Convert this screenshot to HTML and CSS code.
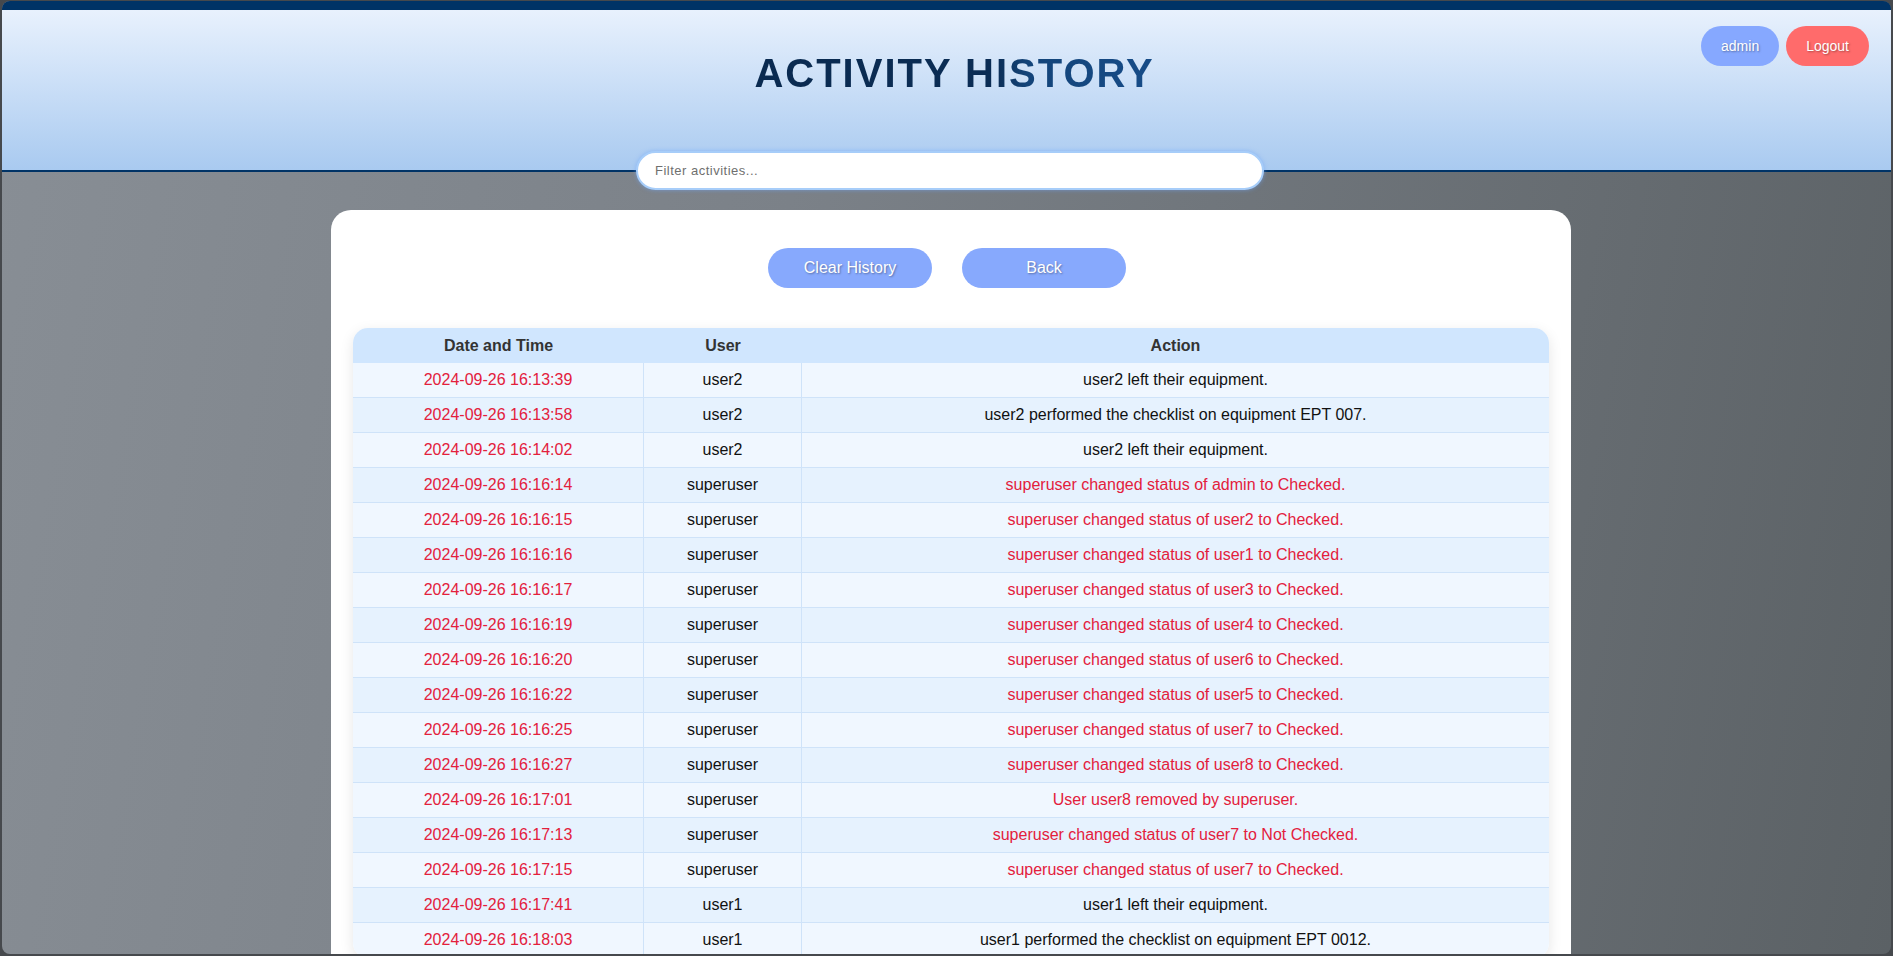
FILE: index.html
```html
<!DOCTYPE html>
<html lang="en">
<head>
<meta charset="utf-8">
<title>Activity History</title>
<link rel="stylesheet" href="styles.css">
</head>
<body>
<div class="window">
  <header class="header">
    <div class="header-spacer"></div>
    <h1 class="title">ACTIVITY HISTORY</h1>
    <div class="user-actions">
      <button class="pill pill-user">admin</button>
      <button class="pill pill-logout">Logout</button>
    </div>
  </header>

  <div class="filter-wrap">
    <input class="filter" type="text" placeholder="Filter activities...">
  </div>

  <main class="main">
    <section class="card">
      <div class="actions">
        <button class="action-btn">Clear History</button>
        <button class="action-btn">Back</button>
      </div>

      <table class="history">
        <colgroup>
          <col class="col-date">
          <col class="col-user">
          <col class="col-action">
        </colgroup>
        <thead>
          <tr><th>Date and Time</th><th>User</th><th>Action</th></tr>
        </thead>
        <tbody>
          <tr><td class="date">2024-09-26 16:13:39</td><td>user2</td><td>user2 left their equipment.</td></tr>
          <tr><td class="date">2024-09-26 16:13:58</td><td>user2</td><td>user2 performed the checklist on equipment EPT 007.</td></tr>
          <tr><td class="date">2024-09-26 16:14:02</td><td>user2</td><td>user2 left their equipment.</td></tr>
          <tr><td class="date">2024-09-26 16:16:14</td><td>superuser</td><td class="alert">superuser changed status of admin to Checked.</td></tr>
          <tr><td class="date">2024-09-26 16:16:15</td><td>superuser</td><td class="alert">superuser changed status of user2 to Checked.</td></tr>
          <tr><td class="date">2024-09-26 16:16:16</td><td>superuser</td><td class="alert">superuser changed status of user1 to Checked.</td></tr>
          <tr><td class="date">2024-09-26 16:16:17</td><td>superuser</td><td class="alert">superuser changed status of user3 to Checked.</td></tr>
          <tr><td class="date">2024-09-26 16:16:19</td><td>superuser</td><td class="alert">superuser changed status of user4 to Checked.</td></tr>
          <tr><td class="date">2024-09-26 16:16:20</td><td>superuser</td><td class="alert">superuser changed status of user6 to Checked.</td></tr>
          <tr><td class="date">2024-09-26 16:16:22</td><td>superuser</td><td class="alert">superuser changed status of user5 to Checked.</td></tr>
          <tr><td class="date">2024-09-26 16:16:25</td><td>superuser</td><td class="alert">superuser changed status of user7 to Checked.</td></tr>
          <tr><td class="date">2024-09-26 16:16:27</td><td>superuser</td><td class="alert">superuser changed status of user8 to Checked.</td></tr>
          <tr><td class="date">2024-09-26 16:17:01</td><td>superuser</td><td class="alert">User user8 removed by superuser.</td></tr>
          <tr><td class="date">2024-09-26 16:17:13</td><td>superuser</td><td class="alert">superuser changed status of user7 to Not Checked.</td></tr>
          <tr><td class="date">2024-09-26 16:17:15</td><td>superuser</td><td class="alert">superuser changed status of user7 to Checked.</td></tr>
          <tr><td class="date">2024-09-26 16:17:41</td><td>user1</td><td>user1 left their equipment.</td></tr>
          <tr><td class="date">2024-09-26 16:18:03</td><td>user1</td><td>user1 performed the checklist on equipment EPT 0012.</td></tr>
        </tbody>
      </table>
    </section>
  </main>
</div>
</body>
</html>
```
FILE: styles.css
```css
* {
  box-sizing: border-box;
}

html,
body {
  margin: 0;
  height: 100%;
  overflow: hidden;
}

body {
  background: #46494d;
  font-family: "Liberation Sans", Arial, sans-serif;
}

.window {
  margin: 1px 2px 2px 2px;
  height: calc(100% - 3px);
  border-radius: 8px;
  overflow: hidden;
  background: linear-gradient(100deg, #888e95 0%, #7b8188 40%, #5b6165 100%);
}

/* Header */
.header {
  height: 171px;
  border-top: 9px solid #003366;
  border-bottom: 2px solid #003366;
  background: linear-gradient(to bottom, #e8f1fd 0%, #a9caf0 100%);
  display: grid;
  grid-template-columns: 1fr auto 1fr;
  padding: 0 22px;
}

.title {
  margin: 40px 0 0 16px;
  font-size: 40px;
  line-height: 46px;
  font-weight: bold;
  letter-spacing: 2px;
  background: linear-gradient(90deg, #0a2a50 0%, #0b2d55 60%, #134479 68%, #174c88 100%);
  -webkit-background-clip: text;
  background-clip: text;
  color: transparent;
  white-space: nowrap;
}

.user-actions {
  justify-self: end;
  align-self: start;
  margin-top: 16px;
  display: flex;
  gap: 7px;
}

.pill {
  height: 40px;
  padding: 0 20px;
  border: none;
  border-radius: 20px;
  font-family: inherit;
  font-size: 14px;
  color: #fff;
  text-shadow: 1px 1px 2px rgba(0, 0, 0, 0.35);
}

.pill-user {
  background: #86a8ff;
}

.pill-logout {
  background: #ff6b6b;
}

/* Filter */
.filter-wrap {
  position: relative;
  margin-top: -21px;
  padding-left: 7px;
  display: flex;
  justify-content: center;
}

.filter {
  width: 628px;
  height: 39px;
  border: 2px solid #a7cdf9;
  border-radius: 20px;
  box-shadow: 0 0 4px rgba(110, 165, 250, 0.6);
  background: #fff;
  padding: 0 17px;
  font-family: inherit;
  font-size: 13px;
  letter-spacing: 0.5px;
  color: #555;
  outline: none;
}

.filter::placeholder {
  color: #6f6f6f;
}

/* Main card */
.main {
  padding-left: 9px;
}

.card {
  width: 1240px;
  margin: 20px auto 0;
  background: #fff;
  border-radius: 20px;
  padding: 38px 22px 40px;
}

.actions {
  display: flex;
  justify-content: center;
  gap: 30px;
  padding-right: 8px;
}

.action-btn {
  width: 164px;
  height: 40px;
  border: none;
  border-radius: 20px;
  background: #87a9fd;
  color: #fff;
  font-family: inherit;
  font-size: 16px;
  text-shadow: 1px 1px 2px rgba(0, 0, 0, 0.35);
}

/* Table */
.history {
  margin-top: 40px;
  width: 100%;
  table-layout: fixed;
  border-collapse: separate;
  border-spacing: 0;
  border-radius: 15px;
  overflow: hidden;
  box-shadow: 0 4px 14px rgba(0, 0, 0, 0.1);
  font-size: 16px;
}

.col-date {
  width: 291px;
}

.col-user {
  width: 158px;
}

.history th {
  height: 35px;
  padding: 0;
  background: #d0e6fe;
  color: #333;
  font-weight: bold;
  text-align: center;
}

.history td {
  height: 35px;
  padding: 0;
  text-align: center;
  color: #111;
  border-bottom: 1px solid #cfe3f9;
  border-right: 1px solid #cfe3f9;
}

.history td:last-child {
  border-right: none;
}

.history tbody tr:nth-child(odd) td {
  background: #f0f7ff;
}

.history tbody tr:nth-child(even) td {
  background: #e6f2fe;
}

.history td.date,
.history td.alert {
  color: #e3203c;
}
```
